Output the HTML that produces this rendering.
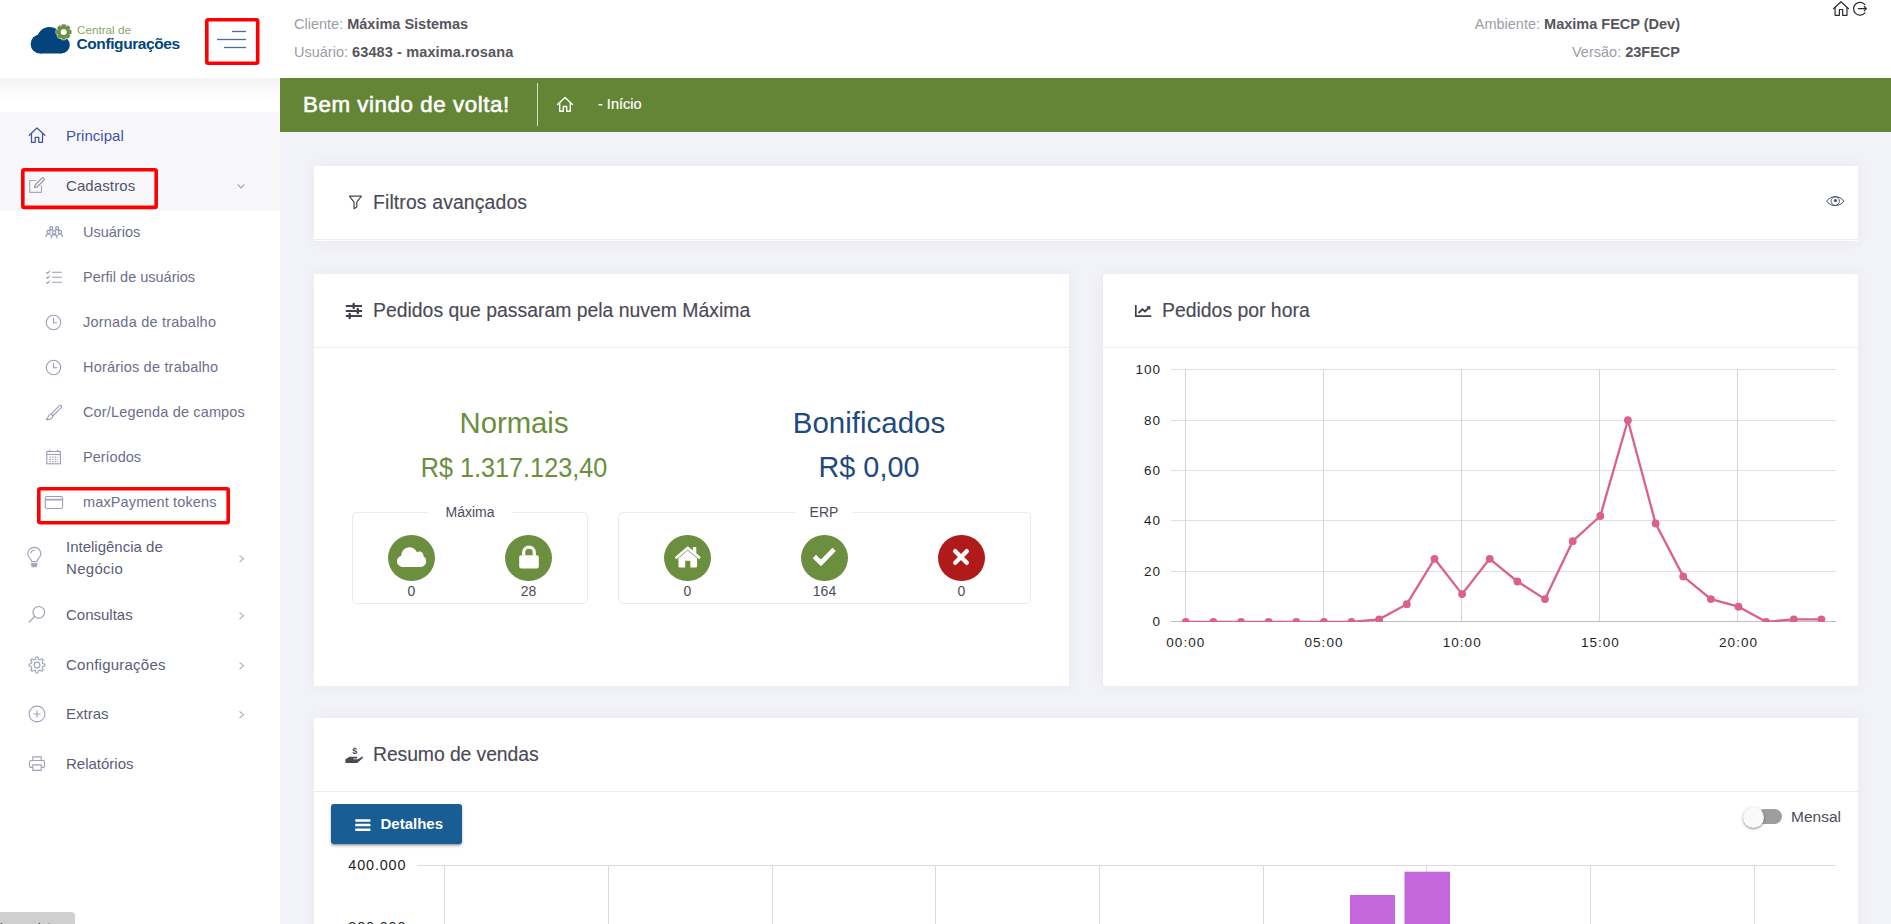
<!DOCTYPE html>
<html lang="pt-br">
<head>
<meta charset="utf-8">
<title>Central de Configurações</title>
<style>
*{box-sizing:border-box;margin:0;padding:0}
html,body{width:1891px;height:924px;overflow:hidden;background:#f2f3f8;font-family:"Liberation Sans",sans-serif;color:#48465b}
.abs{position:absolute}
#header{position:absolute;left:0;top:0;width:1891px;height:78px;background:#fff;z-index:5}
#side{position:absolute;left:0;top:78px;width:280px;height:846px;background:#fff;z-index:3}
#side .shadow{position:absolute;left:0;top:0;width:280px;height:34px;background:linear-gradient(#f3f3f6,#ffffff 65%)}
#side .act{position:absolute;left:0;top:34px;width:280px;height:99px;background:#f8f8fb}
.mi{position:absolute;left:66px;font-size:15px;color:#5b5d77;white-space:nowrap;line-height:22px}
.smi{position:absolute;left:83px;font-size:14.5px;color:#6c6f8c;white-space:nowrap;line-height:20px}
.ico{position:absolute;overflow:visible}
.redbox{position:absolute;border:3px solid #fe0000;border-radius:2px;z-index:9}
.hl{position:absolute;font-size:14.5px;line-height:20px;color:#9d9da6;white-space:nowrap}
.hl b{color:#56565c;font-weight:700}
#bar{position:absolute;left:280px;top:78px;width:1611px;height:54px;background:#638535}
.card{position:absolute;background:#fff;box-shadow:0 0 13px 0 rgba(82,63,105,.07)}
.ct{position:absolute;font-size:19.4px;color:#4a4a57 !important;-webkit-text-stroke:.15px #4a4a57;color:#48465b;white-space:nowrap;line-height:24px}
.hr{position:absolute;left:0;height:1px;background:#ebedf2}
.big{text-align:center;white-space:nowrap;line-height:40px}
.fs{position:absolute;border:1px solid #e9eaf1;border-radius:5px}
.lg{position:absolute;top:227px;height:22px;line-height:22px;background:#fff;text-align:center;font-size:14px;color:#4d4d5a}
.circ{position:absolute;top:261.300px;width:46.600px;height:46.200px;border-radius:50%;background:#6c8f3f}
.num{position:absolute;top:307.700px;width:61px;text-align:center;font-size:14px;line-height:18px;color:#4d4d5a}
.ax{font-family:"Liberation Sans",sans-serif;font-size:13.500px;fill:#1f1f1f}
</style>
</head>
<body>

<!-- ================= HEADER ================= -->
<div id="header">
  <!-- logo -->
  <svg class="ico" style="left:28px;top:20px" width="160" height="40" viewBox="0 0 160 40">
    <g fill="#03447c"><circle cx="12.100" cy="24" r="9.500"/><circle cx="21.500" cy="19.600" r="12.600"/><circle cx="33.300" cy="25" r="8.500"/><rect x="12.100" y="24" width="21.200" height="9.500"/></g>
    <g transform="translate(35.700,12)">
      <g fill="#c9d6e2" stroke="#c9d6e2" stroke-width="1.400" stroke-linejoin="round">
        <circle r="5.800"/>
        <rect x="-2" y="-7.500" width="4" height="15" rx="1"/>
        <rect x="-2" y="-7.500" width="4" height="15" rx="1" transform="rotate(45)"/>
        <rect x="-2" y="-7.500" width="4" height="15" rx="1" transform="rotate(90)"/>
        <rect x="-2" y="-7.500" width="4" height="15" rx="1" transform="rotate(135)"/>
      </g>
      <g fill="#6a913d">
        <circle r="5.900"/>
        <rect x="-2" y="-7.600" width="4" height="15.200" rx="1"/>
        <rect x="-2" y="-7.600" width="4" height="15.200" rx="1" transform="rotate(45)"/>
        <rect x="-2" y="-7.600" width="4" height="15.200" rx="1" transform="rotate(90)"/>
        <rect x="-2" y="-7.600" width="4" height="15.200" rx="1" transform="rotate(135)"/>
      </g>
      <circle r="3" fill="#fff"/>
    </g>
    <text x="49" y="13.800" font-family="Liberation Sans, sans-serif" font-size="11.700" fill="#8aa763" letter-spacing="0">Central de</text>
    <text x="48.500" y="29.400" font-family="Liberation Sans, sans-serif" font-size="15.500" font-weight="700" fill="#03447c" letter-spacing="-.4">Configurações</text>
  </svg>
  <!-- hamburger -->
  <svg class="ico" style="left:214px;top:28px" width="36" height="24" viewBox="0 0 36 24">
    <g stroke="#4a6d9c" stroke-width="1.300">
      <line x1="18" y1="3.500" x2="32" y2="3.500"/>
      <line x1="3" y1="11.500" x2="32" y2="11.500"/>
      <line x1="10" y1="19.500" x2="32" y2="19.500"/>
    </g>
  </svg>
  <svg class="ico" style="left:204.900px;top:18.300px;z-index:9" width="54.5" height="47" viewBox="0 0 54.5 47"><rect x="1.800" y="1.800" width="50.9" height="43.4" rx="1.500" fill="none" stroke="#fe0000" stroke-width="3.600"/></svg>

  <div class="hl" style="left:294px;top:14px">Cliente: <b>Máxima Sistemas</b></div>
  <div class="hl" style="left:294px;top:42px">Usuário: <b style="letter-spacing:.12px">63483 - maxima.rosana</b></div>
  <div class="hl" style="right:211px;top:14px">Ambiente: <b>Maxima FECP (Dev)</b></div>
  <div class="hl" style="right:211px;top:42px">Versão: <b>23FECP</b></div>

  <!-- top right icons -->
  <svg class="ico" style="left:1832px;top:0px" width="18" height="17" viewBox="0 0 18 17" fill="none" stroke="#2a2a33" stroke-width="1.200" stroke-linejoin="round" stroke-linecap="round">
    <path d="M1.500 8.700 L9 1.700 L16.500 8.700"/><path d="M3.100 7.500 V15.300 H7.400 V9.500 H10.700 V15.300 H15 V7.500"/>
  </svg>
  <svg class="ico" style="left:1851.500px;top:0px" width="17" height="17" viewBox="0 0 17 17" fill="none" stroke="#2a2a33" stroke-width="1.200" stroke-linecap="round" stroke-linejoin="round">
    <path d="M12.900 4.600 A6.400 6.400 0 1 0 12.900 12.800"/><path d="M6.300 8.700 H14.200 M12.200 6.500 L14.400 8.700 L12.200 10.900"/>
  </svg>
</div>

<!-- ================= SIDEBAR ================= -->
<div id="side">
  <div class="shadow"></div>
  <div class="act"></div>
  <!-- y coords here are relative to sidebar top (page y - 78) -->
  <!-- Principal -->
  <svg class="ico" style="left:28px;top:49px" width="18" height="17" viewBox="0 0 18 17" fill="none" stroke="#3f51a6" stroke-width="1.250" stroke-linejoin="round" stroke-linecap="round">
    <path d="M1.200 8.300 L9 1 L16.800 8.300"/><path d="M3.500 7 V15.300 H7.200 V10.300 H10.800 V15.300 H14.500 V7"/>
  </svg>
  <div class="mi" style="top:47px;color:#3f53a8;letter-spacing:.03px">Principal</div>
  <!-- Cadastros -->
  <svg class="ico" style="left:28px;top:99px" width="18" height="17" viewBox="0 0 18 17" fill="none" stroke-width="1.200" stroke-linejoin="round" stroke-linecap="round">
    <path d="M8 3.500 H1.700 V15.300 H13.500 V9" stroke="#a9abc0"/>
    <path d="M6.500 10.500 L7.200 7.800 L13.700 1.300 C14.300 .7 15.200 .7 15.800 1.300 C16.400 1.900 16.400 2.800 15.800 3.400 L9.300 9.900 Z" stroke="#8c8fa9"/>
  </svg>
  <div class="mi" style="top:97px;color:#50536c;letter-spacing:0.1px">Cadastros</div>
  <svg class="ico" style="left:235.600px;top:105.400px" width="10" height="7" viewBox="0 0 10 7" fill="none" stroke="#a2a4b9" stroke-width="1.100"><path d="M1.700 1.500 L5 4.900 L8.300 1.500"/></svg>
  <svg class="ico" style="left:20.900px;top:89.500px;z-index:9" width="137" height="41.2" viewBox="0 0 137 41.2"><rect x="1.800" y="1.800" width="133.4" height="37.6" rx="1.500" fill="none" stroke="#fe0000" stroke-width="3.600"/></svg>
  <svg class="ico" style="left:44.800px;top:148px" width="18.400" height="13.800" viewBox="0 0 20 15" fill="none" stroke="#9395b3" stroke-width="1.250"><circle cx="6.800" cy="2.300" r="1.600"/><circle cx="13.200" cy="2.300" r="1.600"/><circle cx="3.800" cy="6.500" r="1.700"/><circle cx="10" cy="7" r="1.800"/><circle cx="16.200" cy="6.500" r="1.700"/><path d="M1 12 C1 9.800 2.300 8.700 3.800 8.700 C5 8.700 5.800 9.300 6.300 10.300"/><path d="M19 12 C19 9.800 17.700 8.700 16.200 8.700 C15 8.700 14.200 9.300 13.700 10.300"/><path d="M6.800 13.500 C6.800 10.800 8.300 9.400 10 9.400 C11.700 9.400 13.200 10.800 13.200 13.500"/><path d="M4.300 4.800 C4.800 4.200 5.700 3.900 6.800 3.900 C7.800 3.900 8.600 4.300 9.100 5"/><path d="M10.900 5 C11.400 4.300 12.200 3.900 13.200 3.900 C14.300 3.900 15.200 4.200 15.700 4.800"/></svg>
  <div class="smi" style="top:144px">Usuários</div>
  <svg class="ico" style="left:45px;top:192px" width="18" height="15" viewBox="0 0 18 15" fill="none" stroke="#9b9db8" stroke-width="1.100" stroke-linecap="round" stroke-linejoin="round"><path d="M1.500 2.300 L2.600 3.400 L4.600 1"/><path d="M1.500 7.300 L2.600 8.400 L4.600 6"/><path d="M1.500 12.300 L2.600 13.400 L4.600 11"/><path d="M7.500 2.300 H16.500 M7.500 7.300 H16.500 M7.500 12.300 H16.500"/></svg>
  <div class="smi" style="top:189px">Perfil de usuários</div>
  <svg class="ico" style="left:45px;top:236px" width="17" height="17" viewBox="0 0 17 17" fill="none" stroke="#9b9db8" stroke-width="1.100" stroke-linecap="round" stroke-linejoin="round"><circle cx="8.500" cy="8.500" r="7.200"/><path d="M8.500 4.300 V8.700 H12"/></svg>
  <div class="smi" style="top:234px;letter-spacing:0.22px">Jornada de trabalho</div>
  <svg class="ico" style="left:45px;top:281px" width="17" height="17" viewBox="0 0 17 17" fill="none" stroke="#9b9db8" stroke-width="1.100" stroke-linecap="round" stroke-linejoin="round"><circle cx="8.500" cy="8.500" r="7.200"/><path d="M8.500 4.300 V8.700 H12"/></svg>
  <div class="smi" style="top:279px;letter-spacing:0.2px">Horários de trabalho</div>
  <svg class="ico" style="left:45px;top:326px" width="18" height="17" viewBox="0 0 18 17" fill="none" stroke="#9b9db8" stroke-width="1.100" stroke-linecap="round" stroke-linejoin="round"><path d="M6 10.200 L14.300 1.700 C14.900 1.100 15.800 1.100 16.300 1.700 C16.800 2.300 16.700 3 16.200 3.600 L7.800 12 Z"/><path d="M6 10.200 C4.500 10.200 3.600 11 3.300 12.300 C3 13.700 2.400 14.800 1.300 15.700 C4.500 15.900 7.800 14.800 7.800 12"/></svg>
  <div class="smi" style="top:324px;letter-spacing:0.15px">Cor/Legenda de campos</div>
  <svg class="ico" style="left:45px;top:370.5px" width="17" height="16" viewBox="0 0 17 16" fill="none" stroke="#9b9db8" stroke-width="1.100"><rect x="1.800" y="2.500" width="13.600" height="12.300"/><path d="M1.800 5.500 H15.400 M4.700 .8 V2.500 M12.500 .8 V2.500"/><g stroke-width="1.300" stroke-dasharray="1.300 1.300"><path d="M4.600 8.200 H13 M4.600 10.400 H13 M4.600 12.600 H13"/></g></svg>
  <div class="smi" style="top:369px">Períodos</div>
  <svg class="ico" style="left:44px;top:416.5px" width="20" height="15" viewBox="0 0 20 15" fill="none" stroke="#9b9db8" stroke-width="1.100"><rect x="1.300" y="1.500" width="17.300" height="12" rx="1.800"/><path d="M1.300 4.300 H18.600 M1.300 5 H18.600" stroke-width="1"/></svg>
  <div class="smi" style="top:414px;letter-spacing:0.13px">maxPayment tokens</div>
  <svg class="ico" style="left:36.800px;top:408.900px;z-index:9" width="193" height="37.5" viewBox="0 0 193 37.5"><rect x="1.800" y="1.800" width="189.4" height="33.9" rx="1.500" fill="none" stroke="#fe0000" stroke-width="3.600"/></svg>
  <svg class="ico" style="left:26px;top:468px" width="17" height="23" viewBox="0 0 17 23" fill="none" stroke="#9fa1ba" stroke-width="1.150" stroke-linecap="round"><path d="M5.700 15.500 C5.700 13.300 1.800 11.500 1.800 7.700 C1.800 4 4.800 1.300 8.300 1.300 C11.800 1.300 14.800 4 14.800 7.700 C14.800 11.500 10.900 13.300 10.900 15.500 Z" stroke-linejoin="round"/><path d="M5 6.800 C5.300 5.300 6.500 4.300 8 4.200"/><path d="M5.300 17.300 H11.300 L10.300 20.800 H6.300 Z" fill="#a3a5bd" stroke-width=".8" stroke-linejoin="round"/></svg>
  <div class="mi" style="top:458px">Inteligência de</div>
  <div class="mi" style="top:480px;letter-spacing:0.3px">Negócio</div>
  <svg class="ico" style="left:237px;top:474.5px" width="8" height="11" viewBox="0 0 8 11" fill="none" stroke="#a7a9be" stroke-width="1.100"><path d="M2.500 2.300 L6.500 5.700 L2.500 9.100"/></svg>
  <svg class="ico" style="left:28px;top:527px" width="19" height="19" viewBox="0 0 19 19" fill="none" stroke="#9fa1ba" stroke-width="1.150" stroke-linecap="round"><circle cx="10.800" cy="7.300" r="5.800"/><path d="M6.700 11.500 L1.200 17"/></svg>
  <div class="mi" style="top:526px">Consultas</div>
  <svg class="ico" style="left:237px;top:531.5px" width="8" height="11" viewBox="0 0 8 11" fill="none" stroke="#a7a9be" stroke-width="1.100"><path d="M2.500 2.300 L6.500 5.700 L2.500 9.100"/></svg>
  <svg class="ico" style="left:28px;top:577.5px" width="18" height="18" viewBox="0 0 18 18" fill="none" stroke="#9fa1ba" stroke-width="1.100" stroke-linejoin="round"><path d="M7.60 3.17 L7.94 1.07 L10.06 1.07 L10.40 3.17 L12.13 3.88 L13.85 2.64 L15.36 4.15 L14.12 5.87 L14.83 7.60 L16.93 7.94 L16.93 10.06 L14.83 10.40 L14.12 12.13 L15.36 13.85 L13.85 15.36 L12.13 14.12 L10.40 14.83 L10.06 16.93 L7.94 16.93 L7.60 14.83 L5.87 14.12 L4.15 15.36 L2.64 13.85 L3.88 12.13 L3.17 10.40 L1.07 10.06 L1.07 7.94 L3.17 7.60 L3.88 5.87 L2.64 4.15 L4.15 2.64 L5.87 3.88 Z"/><circle cx="9" cy="9" r="2.900"/></svg>
  <div class="mi" style="top:576px;letter-spacing:0.23px">Configurações</div>
  <svg class="ico" style="left:237px;top:581.5px" width="8" height="11" viewBox="0 0 8 11" fill="none" stroke="#a7a9be" stroke-width="1.100"><path d="M2.500 2.300 L6.500 5.700 L2.500 9.100"/></svg>
  <svg class="ico" style="left:28px;top:626.5px" width="18" height="18" viewBox="0 0 18 18" fill="none" stroke="#9fa1ba" stroke-width="1.100" stroke-linecap="round"><circle cx="9" cy="9" r="7.900"/><path d="M9 5.800 V12.200 M5.800 9 H12.200"/></svg>
  <div class="mi" style="top:625px">Extras</div>
  <svg class="ico" style="left:237px;top:630.5px" width="8" height="11" viewBox="0 0 8 11" fill="none" stroke="#a7a9be" stroke-width="1.100"><path d="M2.500 2.300 L6.500 5.700 L2.500 9.100"/></svg>
  <svg class="ico" style="left:28px;top:677px" width="18" height="17" viewBox="0 0 18 17" fill="none" stroke="#9fa1ba" stroke-width="1.150" stroke-linejoin="round"><path d="M4.800 5.500 V1.800 H13.200 V5.500"/><path d="M4.800 12.300 H2.800 C2 12.300 1.500 11.800 1.500 11 V6.800 C1.500 6 2 5.500 2.800 5.500 H15.200 C16 5.500 16.500 6 16.500 6.800 V11 C16.500 11.800 16 12.300 15.200 12.300 H13.200"/><rect x="4.800" y="9.800" width="8.400" height="5.500"/></svg>
  <div class="mi" style="top:675px">Relatórios</div>
</div>

<!-- ================= GREEN BAR ================= -->
<div id="bar">
  <div class="abs" style="left:23px;top:12px;font-size:22.300px;line-height:30px;color:#fff;white-space:nowrap;letter-spacing:.58px;-webkit-text-stroke:.6px #fff">Bem vindo de volta!</div>
  <div class="abs" style="left:257px;top:5px;width:1px;height:43px;background:rgba(255,255,255,.75)"></div>
  <svg class="ico" style="left:276px;top:18px" width="18" height="17" viewBox="0 0 18 17" fill="none" stroke="#fff" stroke-width="1.400" stroke-linejoin="round" stroke-linecap="round">
    <path d="M1.500 8.500 L9 1.500 L16.500 8.500"/><path d="M3.700 7.200 V15.300 H7.300 V10.500 H10.700 V15.300 H14.300 V7.200"/>
  </svg>
  <div class="abs" style="left:318px;top:16px;font-size:14.500px;line-height:20px;color:#fff;white-space:nowrap;-webkit-text-stroke:.2px #fff">- Início</div>
</div>

<!-- ================= CARDS ================= -->
<div class="card" id="c1" style="left:314px;top:166px;width:1544px;height:75px">
  <svg class="ico" style="left:34px;top:28.500px" width="14.800" height="14.800" viewBox="0 0 16 16" fill="none" stroke="#46464f" stroke-width="1.300" stroke-linejoin="round"><path d="M1.500 1.200 H14.500 L9.500 7.800 V13 L6.500 14.800 V7.800 Z"/></svg>
  <div class="ct" style="left:59px;top:23.500px;letter-spacing:.13px">Filtros avançados</div>
  <svg class="ico" style="left:1511.800px;top:30.200px" width="18.500" height="10.700" viewBox="0 0 19 11" fill="none" stroke="#3f4c66" stroke-width="1"><path d="M.6 5.300 C3 2.100 6 .7 9.500 .7 C13 .7 16 2.100 18.400 5.300 C16 8.500 13 9.900 9.500 9.900 C6 9.900 3 8.500 .6 5.300 Z"/><circle cx="9.500" cy="5.300" r="4.300" stroke-width=".9"/><circle cx="9.700" cy="4.700" r="1.600" fill="#3f4c66" stroke="none"/></svg>
  <div class="hr" style="top:73px;width:1544px"></div>
</div>
<div class="card" id="c2" style="left:314px;top:274px;width:755px;height:412px">
  <svg class="ico" style="left:31px;top:29px" width="18" height="16" viewBox="0 0 18 16" fill="none" stroke="#42424c" stroke-width="1.900"><path d="M.8 3 H17 M.8 8 H17 M.8 13 H17"/><path d="M8.700 1 V5 M12.800 6 V10 M4.700 11 V15" stroke-width="2.400" stroke-linecap="round"/></svg>
  <div class="ct" style="left:59px;top:23.500px">Pedidos que passaram pela nuvem Máxima</div>
  <div class="hr" style="top:73px;width:755px"></div>
  <div class="abs big" style="left:50px;top:129px;width:300px;color:#6b8e3d;font-size:29.300px">Normais</div>
  <div class="abs big" style="left:50px;top:173px;width:300px;color:#6b8e3d;font-size:28.500px;transform:scaleX(.885)">R$ 1.317.123,40</div>
  <div class="abs big" style="left:405px;top:129px;width:300px;color:#1f4a7d;font-size:29.500px">Bonificados</div>
  <div class="abs big" style="left:405px;top:173px;width:300px;color:#1f4a7d;font-size:28.800px">R$ 0,00</div>

  <div class="fs" style="left:38px;top:238px;width:236px;height:92px"></div>
  <div class="lg" style="left:114px;width:84px">Máxima</div>
  <div class="fs" style="left:304px;top:238px;width:413px;height:92px"></div>
  <div class="lg" style="left:481px;width:58px">ERP</div>

  <div class="circ" style="left:74px"></div>
  <svg class="ico" style="left:82px;top:272px" width="31" height="22" viewBox="0 0 31 22"><path d="M7.500 21 C3.500 21 1 18.300 1 15.200 C1 12.500 2.800 10.300 5.300 9.700 C5.300 5 8.800 1.200 13.500 1.200 C17 1.200 19.800 3.200 21 6.200 C21.700 5.800 22.500 5.600 23.300 5.600 C25.800 5.600 27.700 7.600 27.400 10.300 C29.200 11.300 30.200 13.100 30.200 15.200 C30.200 18.400 27.600 21 24.400 21 Z" fill="#fff"/></svg>
  <div class="num" style="left:67px">0</div>

  <div class="circ" style="left:191px"></div>
  <svg class="ico" style="left:203.500px;top:271px" width="22" height="25" viewBox="0 0 22 25"><path d="M5.700 10.500 V7.500 C5.700 4.300 8 2.200 11 2.200 C14 2.200 16.300 4.300 16.300 7.500 V10.500" fill="none" stroke="#fff" stroke-width="3.200"/><rect x="1.200" y="10.300" width="19.600" height="13.200" rx="2" fill="#fff"/></svg>
  <div class="num" style="left:184px">28</div>

  <div class="circ" style="left:350px"></div>
  <svg class="ico" style="left:359.500px;top:271px" width="27.500" height="24" viewBox="0 0 28 25" fill="#fff"><path d="M14 5.800 L4.300 13.800 V22.500 C4.300 23 4.700 23.400 5.200 23.400 H11.300 V16.400 H16.700 V23.400 H22.800 C23.300 23.400 23.700 23 23.700 22.500 V13.800 Z"/><path d="M14 1.300 L.9 12.200 C.6 12.500 .5 13 .8 13.300 L1.600 14.300 C1.900 14.600 2.400 14.700 2.700 14.400 L14 5 L25.300 14.400 C25.600 14.700 26.100 14.600 26.400 14.300 L27.200 13.300 C27.500 13 27.400 12.500 27.100 12.200 L22.900 8.700 V2.800 C22.900 2.400 22.600 2.100 22.200 2.100 H20 C19.600 2.100 19.300 2.400 19.300 2.800 V5.700 Z"/></svg>
  <div class="num" style="left:343px">0</div>

  <div class="circ" style="left:487px"></div>
  <svg class="ico" style="left:498px;top:272px" width="24.500" height="19.800" viewBox="0 0 26 21"><path d="M2.500 11.200 L9.500 18 L23.500 3.500" fill="none" stroke="#fff" stroke-width="5" stroke-linejoin="miter"/></svg>
  <div class="num" style="left:480px">164</div>

  <div class="circ" style="left:624px;background:#b01a1a"></div>
  <svg class="ico" style="left:637px;top:273.200px" width="20" height="20" viewBox="0 0 20 20"><path d="M4.200 4.200 L15.800 15.800 M15.800 4.200 L4.200 15.800" fill="none" stroke="#fff" stroke-width="4.400" stroke-linecap="round"/></svg>
  <div class="num" style="left:617px">0</div>
</div>
<div class="card" id="c3" style="left:1103px;top:274px;width:755px;height:412px">
  <svg class="ico" style="left:31px;top:29px" width="18" height="15" viewBox="0 0 18 15" fill="none" stroke="#3f3f49" stroke-width="1.700"><path d="M1.800 2 V13.200 H17.300"/><path d="M4.500 10 L8.500 6.300 L11 8.500 L15.500 4" stroke-width="1.900"/><path d="M12.200 3.200 H16.300 V7.300 Z" fill="#3f3f49" stroke="none"/></svg>
  <div class="ct" style="left:59px;top:23.500px">Pedidos por hora</div>
  <div class="hr" style="top:73px;width:755px"></div>
<svg id="chart1" class="ico" style="left:0;top:0" width="755" height="412" viewBox="0 0 755 412">
<defs><clipPath id="cp1"><rect x="60" y="80" width="690" height="268"/></clipPath></defs>
<g stroke="#e0e0e0" stroke-width="1" shape-rendering="crispEdges">
<line x1="68" y1="95.5" x2="732.500" y2="95.5"/>
<line x1="68" y1="146.5" x2="732.500" y2="146.5"/>
<line x1="68" y1="196.5" x2="732.500" y2="196.5"/>
<line x1="68" y1="246.5" x2="732.500" y2="246.5"/>
<line x1="68" y1="297.5" x2="732.500" y2="297.5"/>
</g>
<g stroke="#d4d4d4" stroke-width="1" shape-rendering="crispEdges">
<line x1="82.5" y1="95" x2="82.5" y2="347.500"/>
<line x1="220.5" y1="95" x2="220.5" y2="347.500"/>
<line x1="358.5" y1="95" x2="358.5" y2="347.500"/>
<line x1="496.5" y1="95" x2="496.5" y2="347.500"/>
<line x1="634.5" y1="95" x2="634.5" y2="347.500"/>
</g>
<line x1="68" y1="347.5" x2="732.500" y2="347.5" stroke="#bdbdbd" stroke-width="1" shape-rendering="crispEdges"/>
<g clip-path="url(#cp1)">
<polyline fill="none" stroke="#db6189" stroke-width="2.300" stroke-linejoin="round" points="82.7,347.8 110.3,347.8 138.0,347.8 165.6,347.8 193.3,347.8 220.9,347.8 248.5,347.8 276.2,345.3 303.8,330.2 331.5,284.8 359.1,320.1 386.7,284.8 414.4,307.5 442.0,325.1 469.7,267.2 497.3,242.0 524.9,146.2 552.6,249.5 580.2,302.4 607.9,325.1 635.5,332.7 663.1,347.8 690.8,345.3 718.4,345.3"/>
<circle cx="82.7" cy="347.8" r="3.900" fill="#db6189"/><circle cx="110.3" cy="347.8" r="3.900" fill="#db6189"/><circle cx="138.0" cy="347.8" r="3.900" fill="#db6189"/><circle cx="165.6" cy="347.8" r="3.900" fill="#db6189"/><circle cx="193.3" cy="347.8" r="3.900" fill="#db6189"/><circle cx="220.9" cy="347.8" r="3.900" fill="#db6189"/><circle cx="248.5" cy="347.8" r="3.900" fill="#db6189"/><circle cx="276.2" cy="345.3" r="3.900" fill="#db6189"/><circle cx="303.8" cy="330.2" r="3.900" fill="#db6189"/><circle cx="331.5" cy="284.8" r="3.900" fill="#db6189"/><circle cx="359.1" cy="320.1" r="3.900" fill="#db6189"/><circle cx="386.7" cy="284.8" r="3.900" fill="#db6189"/><circle cx="414.4" cy="307.5" r="3.900" fill="#db6189"/><circle cx="442.0" cy="325.1" r="3.900" fill="#db6189"/><circle cx="469.7" cy="267.2" r="3.900" fill="#db6189"/><circle cx="497.3" cy="242.0" r="3.900" fill="#db6189"/><circle cx="524.9" cy="146.2" r="3.900" fill="#db6189"/><circle cx="552.6" cy="249.5" r="3.900" fill="#db6189"/><circle cx="580.2" cy="302.4" r="3.900" fill="#db6189"/><circle cx="607.9" cy="325.1" r="3.900" fill="#db6189"/><circle cx="635.5" cy="332.7" r="3.900" fill="#db6189"/><circle cx="663.1" cy="347.8" r="3.900" fill="#db6189"/><circle cx="690.8" cy="345.3" r="3.900" fill="#db6189"/><circle cx="718.4" cy="345.3" r="3.900" fill="#db6189"/>
</g>
<text class="ax" x="57.800" y="100.1" text-anchor="end" letter-spacing=".9">100</text>
<text class="ax" x="57.800" y="150.5" text-anchor="end" letter-spacing=".9">80</text>
<text class="ax" x="57.800" y="200.9" text-anchor="end" letter-spacing=".9">60</text>
<text class="ax" x="57.800" y="251.3" text-anchor="end" letter-spacing=".9">40</text>
<text class="ax" x="57.800" y="301.7" text-anchor="end" letter-spacing=".9">20</text>
<text class="ax" x="57.800" y="352.1" text-anchor="end" letter-spacing=".9">0</text>
<text class="ax" x="82.8" y="373" text-anchor="middle" letter-spacing="1.050">00:00</text>
<text class="ax" x="221.0" y="373" text-anchor="middle" letter-spacing="1.050">05:00</text>
<text class="ax" x="359.2" y="373" text-anchor="middle" letter-spacing="1.050">10:00</text>
<text class="ax" x="497.4" y="373" text-anchor="middle" letter-spacing="1.050">15:00</text>
<text class="ax" x="635.6" y="373" text-anchor="middle" letter-spacing="1.050">20:00</text>
</svg>
</div>
<div class="card" id="c4" style="left:314px;top:718px;width:1544px;height:260px">
  <svg class="ico" style="left:30px;top:27px" width="20" height="19" viewBox="0 0 20 19"><text x="10.700" y="9.200" font-family="Liberation Sans, sans-serif" font-size="9" font-weight="700" fill="#4a4a55" text-anchor="middle">$</text><path d="M1.400 14.300 L5.500 11.800 H12.800 C13.600 11.800 13.600 13.400 12.800 13.400 H9.500 L9.200 14.300 H13.800 L18 11.700 C18.700 11.300 19.300 12.300 18.700 12.900 L13.300 17.900 H1.400 Z" fill="#4a4a55"/></svg>
  <div class="ct" style="left:59px;top:23.500px;letter-spacing:-.1px">Resumo de vendas</div>
  <div class="hr" style="top:73px;width:1544px"></div>
  <div class="abs" style="left:17px;top:86px;width:131px;height:40px;background:#185d94;border-radius:3px;box-shadow:0 2px 3px rgba(0,0,0,.28),0 1px 1px rgba(0,0,0,.14)"></div>
  <svg class="ico" style="left:41px;top:101px" width="16" height="13" viewBox="0 0 16 13" fill="#fff"><rect x=".2" y=".2" width="15.300" height="2.500" rx=".6"/><rect x=".2" y="4.800" width="15.300" height="2.500" rx=".6"/><rect x=".2" y="9.400" width="15.300" height="2.500" rx=".6"/></svg>
  <div class="abs" style="left:66.500px;top:96px;font-size:15px;font-weight:700;line-height:20px;color:#fff;letter-spacing:0">Detalhes</div>
  <div class="abs" style="left:1443px;top:91px;width:25px;height:15px;border-radius:8px;background:#9e9e9e"></div>
  <div class="abs" style="left:1428.500px;top:88.500px;width:21px;height:21px;border-radius:50%;background:#fafafa;box-shadow:0 1px 3px rgba(0,0,0,.35),0 1px 1px rgba(0,0,0,.14)"></div>
  <div class="abs" style="left:1477px;top:89px;font-size:15.500px;line-height:20px;color:#4d4d5a">Mensal</div>
  <svg class="ico" style="left:0;top:0" width="1544" height="206" viewBox="0 0 1544 206">
    <g stroke="#dcdcdc" stroke-width="1" shape-rendering="crispEdges">
      <line x1="103" y1="147.500" x2="1521.500" y2="147.500"/>
      <line x1="130.5" y1="147" x2="130.5" y2="206"/>
      <line x1="294.5" y1="147" x2="294.5" y2="206"/>
      <line x1="458.5" y1="147" x2="458.5" y2="206"/>
      <line x1="621.5" y1="147" x2="621.5" y2="206"/>
      <line x1="785.5" y1="147" x2="785.5" y2="206"/>
      <line x1="949.5" y1="147" x2="949.5" y2="206"/>
      <line x1="1112.5" y1="147" x2="1112.5" y2="206"/>
      <line x1="1276.5" y1="147" x2="1276.5" y2="206"/>
      <line x1="1440.5" y1="147" x2="1440.5" y2="206"/>
    </g>
    <rect x="1036" y="177" width="45" height="40" fill="#c466dc"/>
    <rect x="1090.500" y="153.700" width="45.500" height="60" fill="#c466dc"/>
    <text class="ax" x="92.300" y="152.300" text-anchor="end" letter-spacing=".85" style="font-size:14.400px">400.000</text>
    <text class="ax" x="92.300" y="214" text-anchor="end" letter-spacing=".85" style="font-size:14.400px">300.000</text>
  </svg>
</div>

<!-- status bubble -->
<div class="abs" style="left:-3px;top:912px;width:78px;height:20px;background:#cfcfcf;border-radius:4px;z-index:20;font-size:12px;color:#222;padding:8.500px 0 0 3px;white-space:nowrap;overflow:hidden">javascript:;</div>

</body>
</html>
